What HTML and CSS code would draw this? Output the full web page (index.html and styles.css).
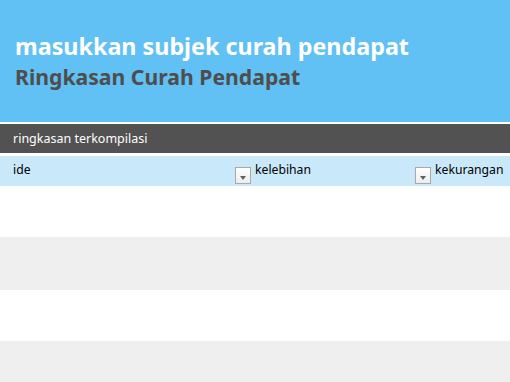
FILE: index.html
```html
<!DOCTYPE html>
<html lang="id">
<head>
<meta charset="utf-8">
<title>Ringkasan Curah Pendapat</title>
<link rel="stylesheet" href="styles.css">
</head>
<body>
<header class="banner">
  <h1 class="title">masukkan subjek curah pendapat</h1>
  <h2 class="subtitle">Ringkasan Curah Pendapat</h2>
</header>
<div class="section-bar">ringkasan terkompilasi</div>
<table class="summary">
  <thead>
    <tr>
      <th class="col-ide"><span class="label">ide</span><span class="filter"></span></th>
      <th class="col-plus"><span class="label">kelebihan</span><span class="filter"></span></th>
      <th class="col-minus"><span class="label">kekurangan</span></th>
    </tr>
  </thead>
  <tbody>
    <tr class="row-odd"><td></td><td></td><td></td></tr>
    <tr class="row-even"><td></td><td></td><td></td></tr>
    <tr class="row-odd"><td></td><td></td><td></td></tr>
    <tr class="row-even"><td></td><td></td><td></td></tr>
  </tbody>
</table>
</body>
</html>
```

FILE: styles.css
```css
html, body {
  margin: 0;
  padding: 0;
  background: #ffffff;
  font-family: "Noto Sans", "DejaVu Sans", sans-serif;
  overflow: hidden;
}

.banner {
  background: #61c1f4;
  height: 122px;
  box-sizing: border-box;
  padding: 31px 15px 0;
}

.title {
  margin: 0;
  color: #ffffff;
  font-size: 23.3px;
  font-weight: bold;
  line-height: 30px;
}

.subtitle {
  margin: 0;
  color: #4e4e4e;
  font-size: 21.2px;
  font-weight: bold;
  line-height: 32px;
}

.section-bar {
  margin-top: 2px;
  height: 29px;
  box-sizing: border-box;
  background: #525252;
  color: #ffffff;
  font-size: 12.5px;
  line-height: 29px;
  padding-left: 13px;
}

.summary {
  margin-top: 3px;
  width: 100%;
  border-collapse: collapse;
  table-layout: fixed;
}

.summary th {
  background: #c9e8f9;
  height: 30px;
  padding: 0;
  font-weight: normal;
  font-size: 12.2px;
  color: #000000;
  text-align: left;
  vertical-align: top;
  position: relative;
}

.col-ide { width: 253px; }
.col-plus { width: 180px; }

.label {
  display: block;
  padding: 6px 0 0 2px;
  line-height: 16px;
}

.col-ide .label { padding-left: 13px; }

.filter {
  position: absolute;
  right: 2px;
  top: 11px;
  width: 16px;
  height: 17px;
  box-sizing: border-box;
  border: 1px solid #a9a9a9;
  background: linear-gradient(#ffffff, #ececec);
}

.filter::after {
  content: "";
  position: absolute;
  left: 4px;
  top: 8px;
  border-left: 3.5px solid transparent;
  border-right: 3.5px solid transparent;
  border-top: 4px solid #606060;
}

.summary td {
  padding: 0;
}

.row-odd td {
  height: 51px;
  background: #ffffff;
}

.row-even td {
  height: 53px;
  background: #efefef;
}
```
